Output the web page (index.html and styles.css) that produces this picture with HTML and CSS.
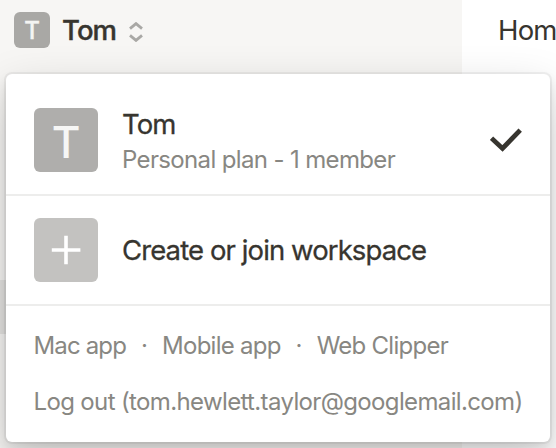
FILE: index.html
```html
<!DOCTYPE html>
<html lang="en">
<head>
<meta charset="utf-8">
<title>Workspace menu</title>
<link rel="stylesheet" href="styles.css">
</head>
<body>
<div class="app">
  <aside class="sidebar">
    <div class="switcher">
      <span class="badge">T</span>
      <span class="switcher-name">Tom</span>
      <svg class="chevrons" width="16" height="20" viewBox="0 0 16 20"><path d="M2 6.6 8 1.6l6 5M2 13.4l6 5 6-5"/></svg>
    </div>
    <div class="selected-row"></div>
  </aside>
  <main class="page"><span class="crumb">Home</span></main>
</div>
<div class="menu">
  <div class="item">
    <span class="avatar avatar-workspace">T</span>
    <div class="details">
      <div class="title">Tom</div>
      <div class="subtitle">Personal plan - 1 member</div>
    </div>
    <svg class="check" width="32" height="24" viewBox="0 0 32 24"><path d="M1.5 10.2 12.5 20.5 30.2 2.2"/></svg>
  </div>
  <div class="item item-create">
    <span class="avatar avatar-add"><svg width="30" height="30" viewBox="0 0 30 30"><path d="M.8 15h28.6M15 .7v28.6"/></svg></span>
    <div class="title">Create or join workspace</div>
  </div>
  <div class="footer">
    <div class="links"><span class="mac">Mac app</span><span class="dot">·</span><span class="mobile">Mobile app</span><span class="dot">·</span><span class="clipper">Web Clipper</span></div>
    <div class="logout">Log out (tom.hewlett.taylor@googlemail.com)</div>
  </div>
</div>
</body>
</html>
```
FILE: styles.css
```css
* { box-sizing: border-box; }
body {
  margin: 0;
  width: 556px;
  height: 448px;
  overflow: hidden;
  background: #fff;
  color: #37352f;
  font-family: Inter, "Liberation Sans", sans-serif;
}
svg { display: block; fill: none; stroke: currentColor; }
.app { display: flex; height: 448px; }
.sidebar { width: 462px; flex: none; background: #f7f6f4; }
.switcher { display: flex; align-items: center; height: 60px; padding-left: 14px; }
.badge {
  width: 36px;
  height: 36px;
  padding-top: 1px;
  border-radius: 6px;
  background: #a9a8a5;
  color: #f4f4f2;
  font-size: 24px;
  font-weight: 500;
  line-height: 36px;
  text-align: center;
  -webkit-text-stroke: .4px currentColor;
}
.switcher-name {
  margin-left: 12px;
  width: 54px;
  font-size: 27.5px;
  font-weight: 500;
  line-height: 36px;
  letter-spacing: -.9px;
  -webkit-text-stroke: .4px currentColor;
}
.chevrons { margin: 4px 0 0 12px; color: #a9a8a5; stroke-width: 2.8; }
.selected-row { margin-top: 220px; height: 54px; background: #e5e4e2; }
.page { flex: 1; padding: 12px 0 0 36px; overflow: hidden; }
.crumb { font-size: 27.5px; line-height: 36px; letter-spacing: -.8px; }
.menu {
  position: absolute;
  left: 6px;
  top: 74px;
  width: 544px;
  height: 368px;
  border-radius: 6px;
  background: #fff;
  box-shadow: 0 0 0 2px rgba(15, 15, 15, .05), 0 6px 12px rgba(15, 15, 15, .1), 0 18px 48px rgba(15, 15, 15, .2);
}
.item {
  display: flex;
  align-items: center;
  height: 122px;
  padding: 10px 28px 0;
  border-bottom: 2px solid #ededec;
}
.item:first-child { padding-top: 12px; }
.item-create { height: 110px; padding-top: 0; }
.avatar {
  display: grid;
  place-items: center;
  flex: none;
  width: 64px;
  height: 64px;
  border-radius: 6px;
  margin-right: 24px;
}
.avatar-workspace { padding-top: 4px; background: #afaeac; color: #f6f6f5; font-size: 44px; font-weight: 500; line-height: 60px; }
.avatar-add { background: #c3c2c0; color: #fff; }
.avatar-add svg { stroke-width: 3.6; }
.details { flex: 1; padding-top: 3px; white-space: nowrap; }
.title { font-size: 27.5px; line-height: 36px; letter-spacing: -.9px; white-space: nowrap; -webkit-text-stroke: .3px currentColor; }
.subtitle { font-size: 24px; line-height: 35px; letter-spacing: -.64px; color: #888782; }
.check { stroke-width: 4.8; }
.footer { padding: 22px 28px 0 27.5px; font-size: 24px; line-height: 36px; letter-spacing: -.64px; color: #888782; white-space: nowrap; }
.links { display: flex; }
.mac { letter-spacing: -.85px; }
.mobile, .clipper { letter-spacing: -.74px; }
.dot { width: 36px; text-align: center; }
.logout { margin-top: 20px; }
```
